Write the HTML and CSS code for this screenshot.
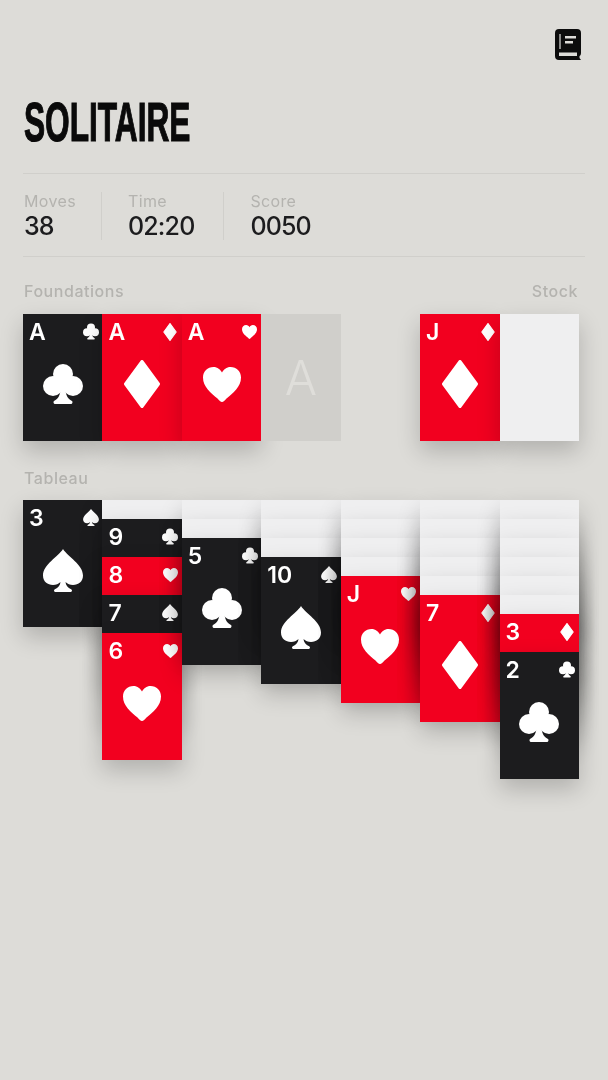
FILE: index.html
```html
<!DOCTYPE html>
<html lang="en">
<head>
<meta charset="utf-8">
<title>Solitaire</title>
<link rel="stylesheet" href="styles.css">
</head>
<body>
<svg class="sprite" aria-hidden="true">
  <symbol id="club" viewBox="0 0 40 40"><circle cx="20" cy="10" r="10"/><circle cx="10" cy="22" r="10"/><circle cx="30" cy="22" r="10"/><rect x="14" y="13" width="12" height="12"/><path d="M17.500 24C17.500 31 15.500 34.500 11 37 10 37.800 10.500 40 12 40H28C29.500 40 30 37.800 29 37 24.500 34.500 22.500 31 22.500 24Z"/></symbol>
  <symbol id="diamond" viewBox="0 0 36 48"><path d="M18 1.500 34.500 24 18 46.500 1.500 24Z" stroke="#fff" stroke-width="3" stroke-linejoin="round"/></symbol>
  <symbol id="heart" viewBox="0 0 38 35"><path d="M19 35C17.500 35 16.500 33.500 14.500 31.500 8 26 0 20 0 10.500 0 4.500 4.500 0 10.500 0 14.500 0 17.500 2.500 19 5.500 20.500 2.500 23.500 0 27.500 0 33.500 0 38 4.500 38 10.500 38 20 30 26 23.500 31.500 21.500 33.500 20.500 35 19 35Z"/></symbol>
  <symbol id="spade" viewBox="0 0 40 43"><path d="M20 0C15.500 7.500 0 15.500 0 26.500 0 32.500 4.500 36 10 36 13 36 15.500 35 17.500 33 17.200 36 15.500 38.500 11.500 40.500 10.500 41.200 11 43 12.500 43H27.500C29 43 29.500 41.200 28.500 40.500 24.500 38.500 22.800 36 22.500 33 24.500 35 27 36 30 36 35.500 36 40 32.500 40 26.500 40 15.500 24.500 7.500 20 0Z"/></symbol>
</svg>
<main class="page">
  <header class="topbar">
    <svg class="book" viewBox="0 0 26 31">
      <path class="book-body" d="M4 0H22A4 4 0 0 1 26 4V24C26 26 25 27 24.500 27V29L26 31H4A4 4 0 0 1 0 27V4A4 4 0 0 1 4 0Z"/>
      <path class="book-spine" d="M4 5H6V20H4Z"/>
      <path class="book-line" d="M10 7H21V9.500H10ZM10 12H18V14.500H10ZM4 23.500H22V27H4Z"/>
    </svg>
  </header>
  <h1 class="title">SOLITAIRE</h1>
  <section class="stats">
    <div class="stat stat-moves"><span class="label">Moves</span><span class="value">38</span></div>
    <div class="stat stat-time"><span class="label">Time</span><span class="value">02:20</span></div>
    <div class="stat stat-score"><span class="label">Score</span><span class="value">0050</span></div>
  </section>
  <div class="label-row"><span class="label">Foundations</span><span class="label">Stock</span></div>
  <section class="board">
    <div class="card black"><div class="head"><span class="rank">A</span><span class="pip"><svg class="s-club"><use href="#club"/></svg></span></div><div class="big"><svg class="b-club"><use href="#club"/></svg></div></div>
    <div class="card red"><div class="head"><span class="rank">A</span><span class="pip"><svg class="s-diamond"><use href="#diamond"/></svg></span></div><div class="big"><svg class="b-diamond"><use href="#diamond"/></svg></div></div>
    <div class="card red"><div class="head"><span class="rank">A</span><span class="pip"><svg class="s-heart"><use href="#heart"/></svg></span></div><div class="big"><svg class="b-heart"><use href="#heart"/></svg></div></div>
    <div class="slot">A</div>
    <div class="gap"></div>
    <div class="card red"><div class="head"><span class="rank">J</span><span class="pip"><svg class="s-diamond"><use href="#diamond"/></svg></span></div><div class="big"><svg class="b-diamond"><use href="#diamond"/></svg></div></div>
    <div class="card back"></div>
  </section>
  <div class="label-row tableau-label"><span class="label">Tableau</span></div>
  <section class="board tableau">
    <div class="pile">
      <div class="card black"><div class="head"><span class="rank">3</span><span class="pip"><svg class="s-spade"><use href="#spade"/></svg></span></div><div class="big"><svg class="b-spade"><use href="#spade"/></svg></div></div>
    </div>
    <div class="pile">
      <div class="card back down"></div>
      <div class="card black up"><div class="head"><span class="rank">9</span><span class="pip"><svg class="s-club"><use href="#club"/></svg></span></div></div>
      <div class="card red up"><div class="head"><span class="rank">8</span><span class="pip"><svg class="s-heart"><use href="#heart"/></svg></span></div></div>
      <div class="card black up"><div class="head"><span class="rank">7</span><span class="pip"><svg class="s-spade"><use href="#spade"/></svg></span></div></div>
      <div class="card red"><div class="head"><span class="rank">6</span><span class="pip"><svg class="s-heart"><use href="#heart"/></svg></span></div><div class="big"><svg class="b-heart"><use href="#heart"/></svg></div></div>
    </div>
    <div class="pile">
      <div class="card back down"></div>
      <div class="card back down"></div>
      <div class="card black"><div class="head"><span class="rank">5</span><span class="pip"><svg class="s-club"><use href="#club"/></svg></span></div><div class="big"><svg class="b-club"><use href="#club"/></svg></div></div>
    </div>
    <div class="pile">
      <div class="card back down"></div>
      <div class="card back down"></div>
      <div class="card back down"></div>
      <div class="card black"><div class="head"><span class="rank">10</span><span class="pip"><svg class="s-spade"><use href="#spade"/></svg></span></div><div class="big"><svg class="b-spade"><use href="#spade"/></svg></div></div>
    </div>
    <div class="pile">
      <div class="card back down"></div>
      <div class="card back down"></div>
      <div class="card back down"></div>
      <div class="card back down"></div>
      <div class="card red"><div class="head"><span class="rank">J</span><span class="pip"><svg class="s-heart"><use href="#heart"/></svg></span></div><div class="big"><svg class="b-heart"><use href="#heart"/></svg></div></div>
    </div>
    <div class="pile">
      <div class="card back down"></div>
      <div class="card back down"></div>
      <div class="card back down"></div>
      <div class="card back down"></div>
      <div class="card back down"></div>
      <div class="card red"><div class="head"><span class="rank">7</span><span class="pip"><svg class="s-diamond"><use href="#diamond"/></svg></span></div><div class="big"><svg class="b-diamond"><use href="#diamond"/></svg></div></div>
    </div>
    <div class="pile">
      <div class="card back down"></div>
      <div class="card back down"></div>
      <div class="card back down"></div>
      <div class="card back down"></div>
      <div class="card back down"></div>
      <div class="card back down"></div>
      <div class="card red up"><div class="head"><span class="rank">3</span><span class="pip"><svg class="s-diamond"><use href="#diamond"/></svg></span></div></div>
      <div class="card black"><div class="head"><span class="rank">2</span><span class="pip"><svg class="s-club"><use href="#club"/></svg></span></div><div class="big"><svg class="b-club"><use href="#club"/></svg></div></div>
    </div>
  </section>
</main>
</body>
</html>
```
FILE: styles.css
```css
* { box-sizing: border-box; }
html, body { margin: 0; padding: 0; }
body {
  width: 608px;
  height: 1080px;
  overflow: hidden;
  background: #dddcd8;
  font-family: Inter, "Liberation Sans", sans-serif;
  color: #1c1c1e;
}
.sprite { display: none; }
.page { padding: 29px 23px 0; filter: blur(.4px); }

.topbar { display: flex; justify-content: flex-end; padding-right: 4px; height: 31px; }
.book { width: 26px; height: 31px; display: block; }
.book-body { fill: #0c0c0c; }
.book-line { fill: #dddcd8; }
.book-spine { fill: #8a8a88; }

.title {
  margin: 34px 0 0 1px;
  height: 79px;
  font-family: "Liberation Sans", sans-serif;
  font-weight: 700;
  font-size: 56px;
  line-height: 56px;
  color: #0a0a0a;
  transform: scaleX(.565);
  transform-origin: left top;
  -webkit-text-stroke: 1.2px #0a0a0a;
  white-space: nowrap;
}

.stats {
  display: flex;
  padding: 18px 0 16px;
  border-top: 1px solid #d0cfcb;
  border-bottom: 1px solid #d0cfcb;
}
.stat {
  display: flex;
  flex-direction: column;
  height: 48px;
  padding: 0 29px 0 26px;
  border-right: 1px solid #d0cfcb;
}
.stat-moves { padding: 0 0 0 1px; width: 79px; }
.stat-score { border-right: 0; }
.label { font-size: 16px; line-height: 18px; font-weight: 400; color: #b4b3af; letter-spacing: .35px; }
.value { margin-top: 1px; font-size: 25px; line-height: 30px; font-weight: 500; color: #1c1c1e; letter-spacing: -.85px; }

.label-row {
  display: flex;
  justify-content: space-between;
  width: 556px;
  padding: 0 1px;
  height: 18px;
  margin-top: 25px;
  margin-bottom: 14px;
}
.label-row .label { letter-spacing: .55px; font-weight: 500; }
.tableau-label { margin-top: 28px; margin-bottom: 13px; }

.board { display: grid; grid-template-columns: repeat(7, 79.43px); }
.tableau { align-items: start; }

.card {
  height: 127px;
  display: flex;
  flex-direction: column;
  color: #fff;
  box-shadow: 0 10px 22px rgba(0, 0, 0, .2);
}
.card.black { background: #1c1c1e; }
.card.red { background: #f2001f; }
.card.back { background: #efeff0; }
.card.down { margin-bottom: -108px; }
.card.up { margin-bottom: -89px; }

.head {
  height: 35px;
  padding: 0 .5px 0 6px;
  display: flex;
  justify-content: space-between;
  align-items: center;
  flex: none;
}
.rank { font-size: 23px; line-height: 35px; font-weight: 600; padding-top: 1px; }
.pip { width: 22px; display: flex; justify-content: center; align-items: center; }
.big { height: 70px; display: flex; justify-content: center; align-items: center; }
svg { fill: #fff; }

.s-club, .s-spade { width: 16px; height: 17px; }
.s-diamond { width: 14px; height: 18px; }
.s-heart { width: 15px; height: 14px; }
.b-club { width: 40px; height: 40px; }
.b-spade { width: 40px; height: 43px; }
.b-diamond { width: 36px; height: 48px; }
.b-heart { width: 38px; height: 35px; }

.slot {
  height: 127px;
  background: #d0cfcb;
  color: #dfdeda;
  font-size: 48px;
  font-weight: 300;
  display: flex;
  align-items: center;
  justify-content: center;
}
```
